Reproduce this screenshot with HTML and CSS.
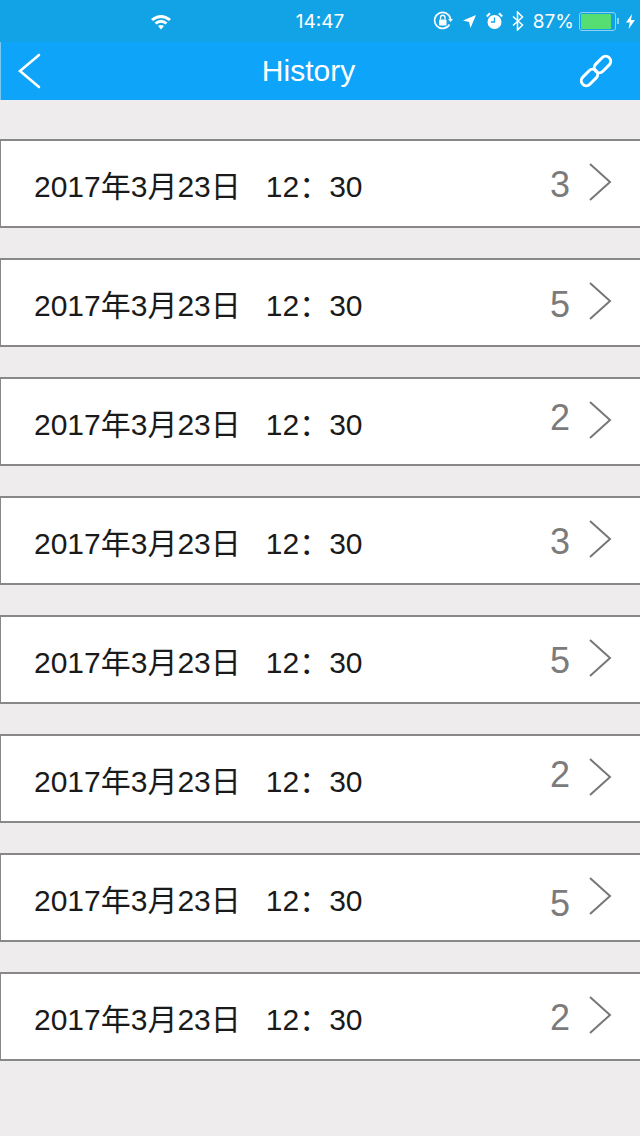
FILE: index.html
```html
<!DOCTYPE html>
<html lang="en">
<head>
    <meta charset="UTF-8">
    <meta name="viewport" content="width=device-width, initial-scale=1.0">
    <title>History</title>
    <link rel="stylesheet" href="styles.css">
</head>
<body>
    <div class="status-bar">
        <svg class="wifi" width="22" height="17" viewBox="0 0 22 17">
            <path d="M1 6 Q11 -2 21 6 L19 8 Q11 2 3 8 Z" fill="#fff"/>
            <path d="M4.5 9.5 Q11 4 17.5 9.5 L15.5 11.5 Q11 8 6.5 11.5 Z" fill="#fff"/>
            <path d="M8 13 Q11 11 14 13 L11 16.5 Z" fill="#fff"/>
        </svg>
        <span class="clock">14:47</span>
        <div class="status-right">
            <svg width="20" height="20" viewBox="0 0 20 20">
                <path d="M16.5 13.5 A8 8 0 1 1 17.5 8" fill="none" stroke="#fff" stroke-width="1.6"/>
                <path d="M15 8 L20 8 L17.5 11 Z" fill="#fff"/>
                <rect x="6" y="8.5" width="7.5" height="6" rx="1" fill="#fff"/>
                <path d="M7.5 8.5 V6.5 A2.2 2.2 0 0 1 12 6.5 V8.5" fill="none" stroke="#fff" stroke-width="1.3"/>
            </svg>
            <svg class="gap-l" width="15" height="15" viewBox="0 0 15 15">
                <path d="M14 1 L8.5 14 L7 8 L1 6.5 Z" fill="#fff"/>
            </svg>
            <svg class="gap-l" width="17" height="18" viewBox="0 0 17 18">
                <circle cx="8.5" cy="10" r="7" fill="#fff"/>
                <path d="M8.5 5.5 V10 H5" fill="none" stroke="#12a3e6" stroke-width="1.3"/>
                <path d="M0.8 4.5 L4 1.2 M16.2 4.5 L13 1.2" stroke="#fff" stroke-width="2"/>
            </svg>
            <svg class="gap-l" width="12" height="20" viewBox="0 0 12 20">
                <path d="M1 5.5 L10.5 14 L5.5 19 V1 L10.5 6 L1 14.5" fill="none" stroke="#fff" stroke-width="1.5"/>
            </svg>
            <span class="battery-pct">87%</span>
            <div class="battery"><div class="battery-fill"></div></div>
            <div class="battery-tip"></div>
            <svg class="bolt" width="9" height="15" viewBox="0 0 9 15">
                <path d="M6 0 L0 8.5 H3.8 L2.6 15 L9 6 H5 Z" fill="#fff"/>
            </svg>
        </div>
    </div>

    <div class="nav-bar">
        <svg class="back" width="26" height="38" viewBox="0 0 26 38">
            <path d="M23 3 L4 19 L23 35" fill="none" stroke="#fff" stroke-width="2.6" stroke-linecap="round"/>
        </svg>
        <h1 class="nav-title">History</h1>
        <svg class="link" width="34" height="34" viewBox="0 0 34 34">
            <g fill="none" stroke="#fff" stroke-width="3">
                <rect x="-9.5" y="-5" width="19" height="10" rx="5" transform="translate(10.5 23.5) rotate(-45)"/>
                <rect x="-9.5" y="-5" width="19" height="10" rx="5" transform="translate(23.5 10.5) rotate(-45)"/>
            </g>
        </svg>
    </div>

    <div class="history-list">
        <div class="history-row"><span class="when">2017年3月23日&nbsp;&nbsp;&nbsp;12：30</span><span class="count shift-1">3</span><svg class="chevron" width="26" height="40" viewBox="0 0 26 40"><path d="M3 2 L23 20 L3 38" fill="none" stroke="#777" stroke-width="2"/></svg></div>
        <div class="history-row"><span class="when">2017年3月23日&nbsp;&nbsp;&nbsp;12：30</span><span class="count shift-2">5</span><svg class="chevron" width="26" height="40" viewBox="0 0 26 40"><path d="M3 2 L23 20 L3 38" fill="none" stroke="#777" stroke-width="2"/></svg></div>
        <div class="history-row"><span class="when">2017年3月23日&nbsp;&nbsp;&nbsp;12：30</span><span class="count shift-up">2</span><svg class="chevron" width="26" height="40" viewBox="0 0 26 40"><path d="M3 2 L23 20 L3 38" fill="none" stroke="#777" stroke-width="2"/></svg></div>
        <div class="history-row"><span class="when">2017年3月23日&nbsp;&nbsp;&nbsp;12：30</span><span class="count shift-1">3</span><svg class="chevron" width="26" height="40" viewBox="0 0 26 40"><path d="M3 2 L23 20 L3 38" fill="none" stroke="#777" stroke-width="2"/></svg></div>
        <div class="history-row"><span class="when">2017年3月23日&nbsp;&nbsp;&nbsp;12：30</span><span class="count shift-1">5</span><svg class="chevron" width="26" height="40" viewBox="0 0 26 40"><path d="M3 2 L23 20 L3 38" fill="none" stroke="#777" stroke-width="2"/></svg></div>
        <div class="history-row"><span class="when">2017年3月23日&nbsp;&nbsp;&nbsp;12：30</span><span class="count shift-up">2</span><svg class="chevron" width="26" height="40" viewBox="0 0 26 40"><path d="M3 2 L23 20 L3 38" fill="none" stroke="#777" stroke-width="2"/></svg></div>
        <div class="history-row"><span class="when">2017年3月23日&nbsp;&nbsp;&nbsp;12：30</span><span class="count shift-down">5</span><svg class="chevron" width="26" height="40" viewBox="0 0 26 40"><path d="M3 2 L23 20 L3 38" fill="none" stroke="#777" stroke-width="2"/></svg></div>
        <div class="history-row"><span class="when">2017年3月23日&nbsp;&nbsp;&nbsp;12：30</span><span class="count shift-1">2</span><svg class="chevron" width="26" height="40" viewBox="0 0 26 40"><path d="M3 2 L23 20 L3 38" fill="none" stroke="#777" stroke-width="2"/></svg></div>
    </div>
</body>
</html>
```

FILE: styles.css
```css
html, body {
    margin: 0;
    padding: 0;
}

body {
    width: 640px;
    height: 1136px;
    overflow: hidden;
    background-color: #EEECED;
    font-family: "Liberation Sans", "Noto Sans CJK SC", sans-serif;
}

/* Top status strip */
.status-bar {
    height: 42px;
    background-color: #12A3E6;
    color: #fff;
    display: grid;
    grid-template-columns: 1fr auto 1fr;
    align-items: center;
}

.wifi {
    justify-self: start;
    margin-left: 150px;
}

.clock {
    font-size: 19px;
    font-family: "Inter", sans-serif;
    font-weight: 400;
}

.status-right {
    justify-self: end;
    display: flex;
    align-items: center;
    padding-right: 5px;
}

.gap-l {
    margin-left: 9px;
}

.battery-pct {
    margin-left: 9px;
    font-size: 19px;
    font-family: "Inter", sans-serif;
}

.battery {
    margin-left: 5px;
    width: 33px;
    height: 15px;
    padding: 1px;
    border: 1px solid #8FD3F0;
    border-radius: 3px;
    box-sizing: content-box;
}

.battery-fill {
    width: 30px;
    height: 100%;
    background-color: #56DE72;
    border-radius: 1px;
}

.battery-tip {
    width: 2px;
    height: 6px;
    margin-left: 1px;
    background-color: #8FD3F0;
}

.bolt {
    margin-left: 7px;
}

/* Title bar */
.nav-bar {
    height: 58px;
    background-color: #0EA4F9;
    border-left: 1px solid #7CC8F0;
    display: flex;
    align-items: center;
    justify-content: space-between;
    padding: 0 27px 0 15px;
    box-sizing: border-box;
}

.nav-title {
    margin: 0 0 0 -4px;
    font-size: 30px;
    font-weight: 400;
    font-family: "Liberation Sans", sans-serif;
    color: #fff;
}

/* List of past entries */
.history-list {
    display: flex;
    flex-direction: column;
    gap: 30px;
    padding-top: 39px;
}

.history-row {
    height: 89px;
    box-sizing: border-box;
    background-color: #fff;
    border: 1px solid #888;
    border-width: 2px 0 2px 1px;
    display: flex;
    align-items: center;
    padding: 0 27px 0 33px;
}

.when {
    flex: 1;
    font-size: 30px;
    color: #1A1A1A;
}

.count {
    font-size: 36px;
    color: #7B7B7B;
    margin-right: 17px;
}

.shift-1 {
    margin-top: 3px;
}

.shift-2 {
    margin-top: 5px;
}

.shift-up {
    margin-top: -7px;
}

.shift-down {
    margin-top: 13px;
}

.chevron {
    margin-top: -3px;
}
```
